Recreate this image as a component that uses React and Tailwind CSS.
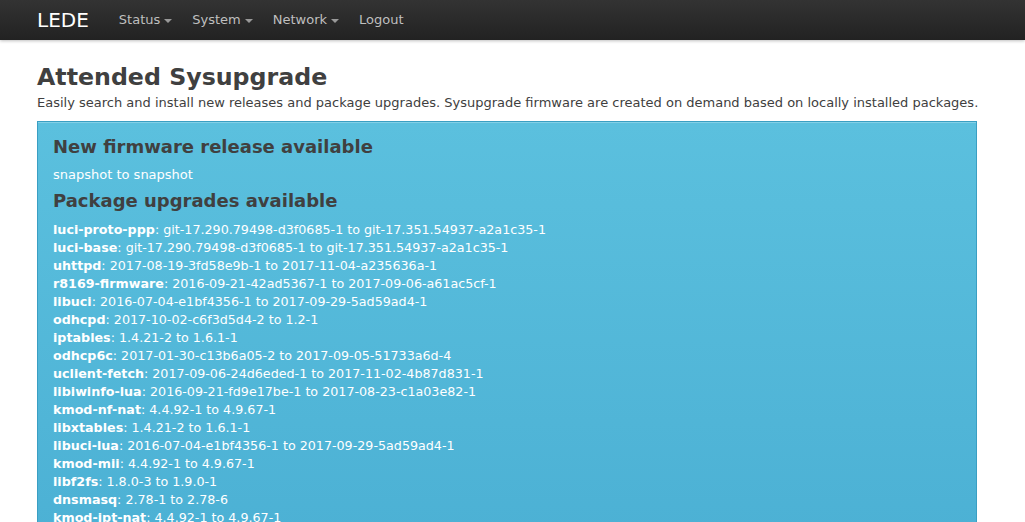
import React from 'react';

const packages = [
  ['luci-proto-ppp', 'git-17.290.79498-d3f0685-1 to git-17.351.54937-a2a1c35-1'],
  ['luci-base', 'git-17.290.79498-d3f0685-1 to git-17.351.54937-a2a1c35-1'],
  ['uhttpd', '2017-08-19-3fd58e9b-1 to 2017-11-04-a235636a-1'],
  ['r8169-firmware', '2016-09-21-42ad5367-1 to 2017-09-06-a61ac5cf-1'],
  ['libuci', '2016-07-04-e1bf4356-1 to 2017-09-29-5ad59ad4-1'],
  ['odhcpd', '2017-10-02-c6f3d5d4-2 to 1.2-1'],
  ['iptables', '1.4.21-2 to 1.6.1-1'],
  ['odhcp6c', '2017-01-30-c13b6a05-2 to 2017-09-05-51733a6d-4'],
  ['uclient-fetch', '2017-09-06-24d6eded-1 to 2017-11-02-4b87d831-1'],
  ['libiwinfo-lua', '2016-09-21-fd9e17be-1 to 2017-08-23-c1a03e82-1'],
  ['kmod-nf-nat', '4.4.92-1 to 4.9.67-1'],
  ['libxtables', '1.4.21-2 to 1.6.1-1'],
  ['libuci-lua', '2016-07-04-e1bf4356-1 to 2017-09-29-5ad59ad4-1'],
  ['kmod-mii', '4.4.92-1 to 4.9.67-1'],
  ['libf2fs', '1.8.0-3 to 1.9.0-1'],
  ['dnsmasq', '2.78-1 to 2.78-6'],
  ['kmod-ipt-nat', '4.4.92-1 to 4.9.67-1'],
  ['kmod-nf-conntrack', '4.4.92-1 to 4.9.67-1'],
];

const NavItem = ({ label, caret }) => (
  <a href="#" className="flex items-center px-[10px] h-10 text-[13px] text-[#bfbfbf]">
    {label}
    {caret && (
      <span className="ml-[4px] mt-[1px] w-0 h-0 border-l-[4px] border-r-[4px] border-t-[4px] border-l-transparent border-r-transparent border-t-[#999]" />
    )}
  </a>
);

export default function App() {
  return (
    <div className="min-h-screen bg-white font-['DejaVu_Sans',sans-serif] text-[#404040]">
      <header className="h-10 bg-gradient-to-b from-[#333] to-[#222] shadow-[0_1px_3px_rgba(0,0,0,0.25)] flex items-center pl-[37px]">
        <span className="text-white text-[20px] leading-10 mr-[20px]">LEDE</span>
        <nav className="flex">
          <NavItem label="Status" caret />
          <NavItem label="System" caret />
          <NavItem label="Network" caret />
          <NavItem label="Logout" />
        </nav>
      </header>

      <main className="px-[37px] pt-[22px]">
        <h1 className="text-[23.7px] font-bold leading-[30px] text-[#404040]">Attended Sysupgrade</h1>
        <p className="text-[13px] leading-[18px] mt-[2px] whitespace-nowrap">
          Easily search and install new releases and package upgrades. Sysupgrade firmware are created on demand based on locally installed packages.
        </p>

        <div className="w-[940px] mt-[9px] h-[600px] border border-[#3a9fc3] bg-gradient-to-b from-[#5bc0de] to-[#45aad0] shadow-[inset_0_1px_0_rgba(255,255,255,0.25)] px-[15px] pt-[12px]">
          <h2 className="text-[18px] font-bold leading-[26px] text-[#404040]">New firmware release available</h2>
          <p className="text-[13px] leading-[18px] text-white mt-[6px]">snapshot to snapshot</p>
          <h2 className="text-[18px] font-bold leading-[26px] text-[#404040] mt-[4px]">Package upgrades available</h2>
          <div className="mt-[7px] text-[12.7px] leading-[18px] text-white">
            {packages.map(([name, ver]) => (
              <div key={name}>
                <b>{name}</b>: {ver}
              </div>
            ))}
          </div>
        </div>
      </main>
    </div>
  );
}
